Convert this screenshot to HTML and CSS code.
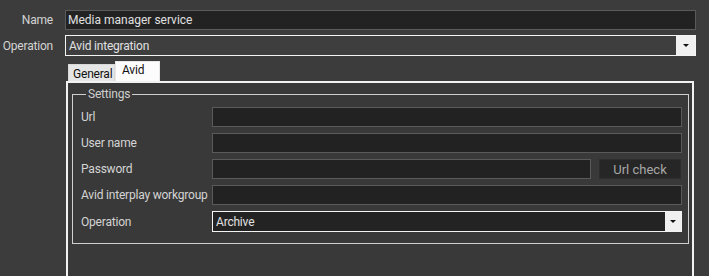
FILE: index.html
```html
<!DOCTYPE html>
<html lang="en">
<head>
    <meta charset="UTF-8">
    <title>Media manager service</title>
    <link rel="stylesheet" href="styles.css">
</head>
<body>

    <div class="form">
        <div class="row">
            <label class="top-label">Name</label>
            <input class="field" type="text" value="Media manager service">
        </div>
        <div class="row">
            <label class="top-label">Operation</label>
            <div class="combo combo-top">
                <span class="combo-text">Avid integration</span>
                <span class="combo-btn"><span class="arrow"></span></span>
            </div>
        </div>

        <div class="tabs">
            <div class="tab">General</div>
            <div class="tab active">Avid</div>
        </div>

        <div class="panel">
            <fieldset class="group">
                <legend>Settings</legend>
                <div class="grow">
                    <label>Url</label>
                    <input class="field" type="text">
                </div>
                <div class="grow">
                    <label>User name</label>
                    <input class="field" type="text">
                </div>
                <div class="grow">
                    <label>Password</label>
                    <input class="field" type="password">
                    <button class="check">Url check</button>
                </div>
                <div class="grow">
                    <label>Avid interplay workgroup</label>
                    <input class="field" type="text">
                </div>
                <div class="grow">
                    <label>Operation</label>
                    <div class="combo combo-low">
                        <span class="combo-text">Archive</span>
                        <span class="combo-btn"><span class="arrow"></span></span>
                    </div>
                </div>
            </fieldset>
        </div>
    </div>

</body>
</html>
```

FILE: styles.css
```css
body {
    margin: 0;
    background: #3c3c3c;
    font-family: Roboto, "Liberation Sans", Arial, sans-serif;
    font-size: 12px;
    letter-spacing: -0.2px;
    color: #d4d4d4;
    overflow: hidden;
    height: 276px;
}
label { white-space: nowrap; }
.form { padding: 10px 13px 0 0; }
.row { display: flex; align-items: center; gap: 12px; margin-bottom: 5px; }
.top-label { width: 53px; text-align: right; flex: none; }

.field {
    flex: 1;
    min-width: 0;
    height: 20px;
    box-sizing: border-box;
    margin: 0;
    padding: 0 2px;
    background: #222;
    border: 1px solid #5a5a5a;
    color: #e0e0e0;
    font: inherit;
    outline: none;
}

.combo {
    flex: 1;
    display: flex;
    height: 21px;
    box-sizing: border-box;
    border: 1px solid #f4f4f4;
}
.combo-top { background: #3e3e3e; }
.combo-low { background: #232323; }
.combo-text { flex: 1; padding: 3px 0 0 3px; color: #e0e0e0; }
.combo-btn {
    width: 19px;
    background: #f0f0f0;
    display: flex;
    align-items: center;
    justify-content: center;
}
.combo-low .combo-btn { width: 16px; }
.arrow {
    width: 0;
    height: 0;
    border-left: 3px solid transparent;
    border-right: 3px solid transparent;
    border-top: 3px solid #111;
}

.tabs { display: flex; align-items: flex-end; margin: 1px 0 0 68px; height: 20px; }
.tab {
    width: 37px;
    height: 16px;
    padding: 0 4px;
    line-height: 18px;
    background: #e6e6e6;
    color: #111;
    border: 1px solid #d8d8d8;
    border-bottom: none;
}
.tab.active {
    height: 19px;
    width: 35px;
    padding-left: 6px;
    padding-right: 2px;
    background: #fcfcfc;
    line-height: 17px;
    border-color: #e8e8e8;
}

.panel {
    margin-left: 66px;
    width: 628px;
    height: 200px;
    box-sizing: border-box;
    border: 2px solid #f2f2f2;
    border-bottom: none;
    background: #393939;
    padding: 4px 3px 0 4px;
}

.group {
    margin: 0;
    padding: 6px 6px 11px 8px;
    border: 1px solid #d0d0d0;
    display: flex;
    flex-direction: column;
    gap: 6px;
}
.group legend { padding: 0 2px; margin-left: 5px; color: #cfcfcf; }
.grow { display: flex; align-items: center; }
.grow label { width: 131px; flex: none; }
.check {
    margin: 0 1px 0 8px;
    width: 82px;
    height: 20px;
    background: #262626;
    border: 1px solid #2e2e2e;
    color: #a8a8a8;
    font: inherit;
    font-size: 13px;
}
```
